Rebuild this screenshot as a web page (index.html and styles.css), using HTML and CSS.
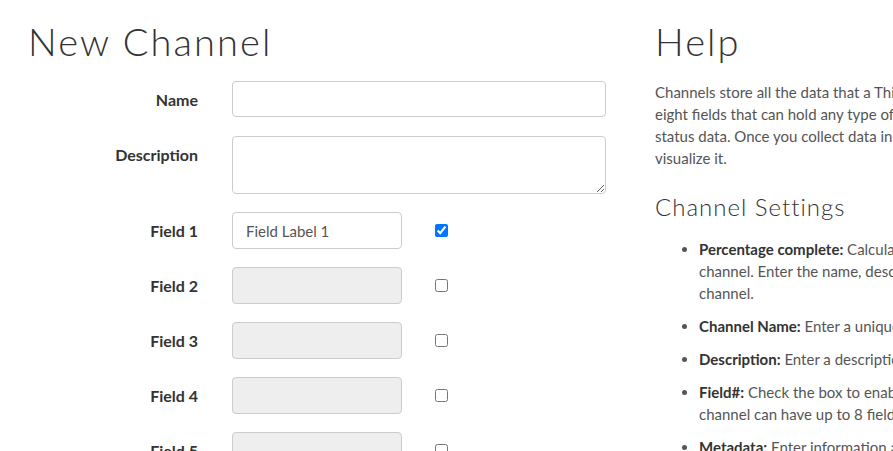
FILE: index.html
```html
<!DOCTYPE html>
<html>
<head>
<meta charset="utf-8">
<link rel="stylesheet" href="styles.css">
</head>
<body>
<div class="page">
  <div class="col-left">
    <h1 class="title">New Channel</h1>
    <form class="form">
      <div class="row">
        <label class="lbl">Name</label>
        <input class="input wide" type="text">
      </div>
      <div class="row">
        <label class="lbl">Description</label>
        <textarea class="input wide area"></textarea>
      </div>
      <div class="row">
        <label class="lbl">Field 1</label>
        <input class="input short" type="text" value="Field Label 1">
        <input class="chk" type="checkbox" checked>
      </div>
      <div class="row">
        <label class="lbl">Field 2</label>
        <input class="input short" type="text" disabled>
        <input class="chk" type="checkbox">
      </div>
      <div class="row">
        <label class="lbl">Field 3</label>
        <input class="input short" type="text" disabled>
        <input class="chk" type="checkbox">
      </div>
      <div class="row">
        <label class="lbl">Field 4</label>
        <input class="input short" type="text" disabled>
        <input class="chk" type="checkbox">
      </div>
      <div class="row">
        <label class="lbl">Field 5</label>
        <input class="input short" type="text" disabled>
        <input class="chk" type="checkbox">
      </div>
    </form>
  </div>
  <div class="col-right">
    <h1 class="title">Help</h1>
    <p class="help">Channels store all the data that a ThingSpeak application collects. Each channel includes<br>eight fields that can hold any type of data, plus three fields for location data and one for<br>status data. Once you collect data in a channel, you can use ThingSpeak apps to analyze and<br>visualize it.</p>
    <h2 class="sub">Channel Settings</h2>
    <ul class="list">
      <li><b>Percentage complete:</b> Calculated based on data entered into the various fields of a<br>channel. Enter the name, description, location, URL, video, and tags to complete your<br>channel.</li>
      <li><b>Channel Name:</b> Enter a unique name for the ThingSpeak channel.</li>
      <li><b>Description:</b> Enter a description of the ThingSpeak channel.</li>
      <li><b>Field#:</b> Check the box to enable the field, and enter a field name. Each ThingSpeak<br>channel can have up to 8 fields.</li>
      <li><b>Metadata:</b> Enter information about channel data, including JSON, XML, or CSV data.</li>
    </ul>
  </div>
</div>
</body>
</html>
```

FILE: styles.css
```css
html, body {
  margin: 0;
  padding: 0;
  overflow: hidden;
  background: #fff;
}
body {
  font-family: "Lato", "Noto Sans", sans-serif;
  font-size: 15px;
  color: #333;
  width: 893px;
  height: 451px;
}
.page {
  display: flex;
  width: 1300px;
}
.col-left {
  width: 627px;
  padding-left: 28px;
  box-sizing: border-box;
  flex: none;
}
.col-right {
  flex: none;
  width: 640px;
  padding-left: 28px;
}
.title {
  font-family: "Lato", sans-serif;
  font-weight: 300;
  font-size: 38px;
  line-height: 44px;
  margin: 19px 0 18px 0;
  color: #333;
  letter-spacing: 2.1px;
}
.form {
  display: flex;
  flex-direction: column;
  gap: 18px;
}
.row {
  display: flex;
  align-items: flex-start;
}
.lbl {
  width: 170px;
  flex: none;
  text-align: right;
  font-weight: 700;
  font-size: 16px;
  line-height: 37px;
  padding-right: 34px;
  color: #333;
}
.input {
  box-sizing: border-box;
  height: 37px;
  border: 1px solid #ccc;
  border-radius: 4px;
  background: #fff;
  font-family: inherit;
  font-size: 15px;
  color: #555;
  padding: 0 13px;
  margin: 0;
  display: block;
}
.wide {
  width: 374px;
  height: 36px;
}
.area {
  height: 58px;
  resize: vertical;
}
.short {
  width: 170px;
}
.input:disabled {
  background: #eee;
}
.chk {
  width: 13px;
  height: 13px;
  margin: 12px 0 0 33px;
}
.help {
  margin: 0;
  line-height: 22px;
  color: #555;
  white-space: nowrap;
}
.sub {
  font-family: "Lato", sans-serif;
  font-weight: 300;
  font-size: 24px;
  line-height: 28px;
  margin: 24px 0 17px 0;
  letter-spacing: 1px;
  color: #333;
}
.list {
  margin: 0;
  padding-left: 44px;
  line-height: 22px;
  color: #555;
  white-space: nowrap;
}
.list li {
  margin-bottom: 11px;
}
.list b {
  color: #333;
}
```
